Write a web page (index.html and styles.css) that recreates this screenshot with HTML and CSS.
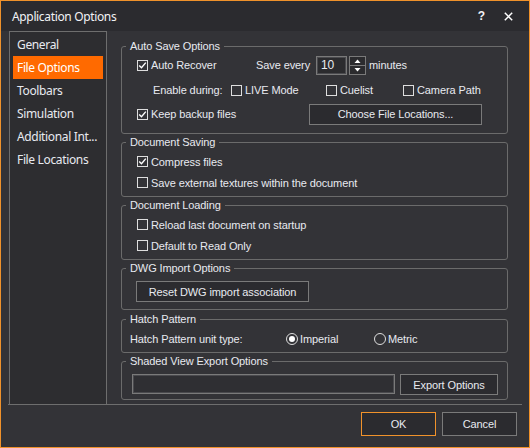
FILE: index.html
```html
<!DOCTYPE html>
<html>
<head>
<meta charset="utf-8">
<title>Application Options</title>
<link rel="stylesheet" href="styles.css">
</head>
<body>
<div class="window">
  <div class="titlebar">
    <span class="title">Application Options</span>
    <span class="tb-btns">
      <span class="help">?</span>
      <svg class="close" width="9" height="9" viewBox="0 0 9 9"><path d="M0.8 0.8L8.2 8.2M8.2 0.8L0.8 8.2" stroke="#ffffff" stroke-width="1.5"/></svg>
    </span>
  </div>
  <div class="main">
    <ul class="nav">
      <li>General</li>
      <li class="sel">File Options</li>
      <li>Toolbars</li>
      <li>Simulation</li>
      <li>Additional Int...</li>
      <li>File Locations</li>
    </ul>
    <div class="content">
      <fieldset class="grp">
        <legend>Auto Save Options</legend>
        <div class="gin g-auto">
          <div class="row r1">
            <label class="chk w-ar"><span class="box"><svg width="9" height="9" viewBox="0 0 9 9"><path d="M1.2 4.4L3.5 6.8L7.8 1.6" fill="none" stroke="#ffffff" stroke-width="1.4"/></svg></span>Auto Recover</label>
            <span class="lbl w-se">Save every</span>
            <span class="num">10</span>
            <span class="spin">
              <span class="sp-half"><svg width="7" height="4" viewBox="0 0 7 4"><path d="M0.5 4L3.5 0.5L6.5 4Z" fill="#ffffff"/></svg></span>
              <span class="sp-half sp-bot"><svg width="7" height="4" viewBox="0 0 7 4"><path d="M0.5 0L6.5 0L3.5 3.5Z" fill="#ffffff"/></svg></span>
            </span>
            <span class="lbl minutes">minutes</span>
          </div>
          <div class="row r2">
            <span class="lbl w-ed">Enable during:</span>
            <label class="chk w-live"><span class="box"></span>LIVE Mode</label>
            <label class="chk w-cue"><span class="box"></span>Cuelist</label>
            <label class="chk"><span class="box"></span>Camera Path</label>
          </div>
          <div class="row r3">
            <label class="chk w-kb"><span class="box"><svg width="9" height="9" viewBox="0 0 9 9"><path d="M1.2 4.4L3.5 6.8L7.8 1.6" fill="none" stroke="#ffffff" stroke-width="1.4"/></svg></span>Keep backup files</label>
            <button class="btn btn-cfl">Choose File Locations...</button>
          </div>
        </div>
      </fieldset>

      <fieldset class="grp">
        <legend>Document Saving</legend>
        <div class="gin g-two">
          <div class="row rr"><label class="chk"><span class="box"><svg width="9" height="9" viewBox="0 0 9 9"><path d="M1.2 4.4L3.5 6.8L7.8 1.6" fill="none" stroke="#ffffff" stroke-width="1.4"/></svg></span>Compress files</label></div>
          <div class="row rr"><label class="chk"><span class="box"></span>Save external textures within the document</label></div>
        </div>
      </fieldset>

      <fieldset class="grp">
        <legend>Document Loading</legend>
        <div class="gin g-two">
          <div class="row rr"><label class="chk"><span class="box"></span>Reload last document on startup</label></div>
          <div class="row rr"><label class="chk"><span class="box"></span>Default to Read Only</label></div>
        </div>
      </fieldset>

      <fieldset class="grp">
        <legend>DWG Import Options</legend>
        <div class="gin g-dwg">
          <button class="btn btn-dwg">Reset DWG import association</button>
        </div>
      </fieldset>

      <fieldset class="grp grp-hatch">
        <legend>Hatch Pattern</legend>
        <div class="gin g-hatch">
          <div class="row rh">
            <span class="lbl w-hp">Hatch Pattern unit type:</span>
            <label class="rdo w-imp"><span class="rad on"></span>Imperial</label>
            <label class="rdo"><span class="rad"></span>Metric</label>
          </div>
        </div>
      </fieldset>

      <fieldset class="grp">
        <legend>Shaded View Export Options</legend>
        <div class="gin g-shade">
          <span class="field"></span>
          <button class="btn btn-exp">Export Options</button>
        </div>
      </fieldset>
    </div>
  </div>
  <div class="footer">
    <button class="btn btn-ok">OK</button>
    <button class="btn btn-cancel">Cancel</button>
  </div>
</div>
</body>
</html>
```

FILE: styles.css
```css
* { box-sizing: border-box; }
html, body { margin: 0; padding: 0; background: #333337; }
body { width: 530px; height: 448px; overflow: hidden; }

.window {
  width: 530px;
  height: 448px;
  border: 1px solid #f0922b;
  background: #333337;
  color: #e8eaf0;
  display: flex;
  flex-direction: column;
  font-family: "Liberation Sans", Arial, sans-serif;
  font-size: 11px;
  letter-spacing: -0.1px;
}

.titlebar {
  flex: none;
  height: 30px;
  background: #2b2b2f;
  display: flex;
  align-items: center;
  justify-content: space-between;
  padding: 0 16px 0 11px;
  font-family: "Noto Sans", sans-serif;
  font-size: 12px;
  letter-spacing: -0.35px;
  color: #f2f2f5;
}
.tb-btns { display: flex; align-items: center; gap: 19px; }
.help { font-weight: bold; font-size: 12px; font-family: "Liberation Sans", Arial, sans-serif; letter-spacing: 0; }
.close { display: block; }

.main {
  flex: none;
  height: 374px;
  display: flex;
  margin: 0 7px 0 7px;
  border-bottom: 1px solid #6e6e6e;
}

.nav {
  margin: 0 0 0 1px;
  padding: 1px 3px 0;
  list-style: none;
  width: 98px;
  border: 1px solid #6e6e6e;
  border-bottom: 0;
  background: #2d2d30;
  font-family: "Noto Sans", sans-serif;
  font-size: 12px;
  letter-spacing: -0.35px;
}
.nav li {
  height: 23px;
  line-height: 23px;
  padding-left: 4px;
  white-space: nowrap;
  overflow: hidden;
}
.nav li.sel { background: #ff6a00; color: #ffffff; }

.content {
  margin-left: 14px;
  width: 387px;
  padding-top: 8px;
  display: flex;
  flex-direction: column;
  gap: 1px;
}

fieldset.grp {
  margin: 0;
  padding: 0;
  min-width: 0;
  border: 1px solid #6b6b6b;
  border-radius: 3px;
}
fieldset.grp-hatch { margin-top: 1px; }
legend {
  margin-left: 4px;
  padding: 0 4px;
  height: 14px;
  line-height: 14px;
}

.gin { display: flex; flex-direction: column; }
.row { display: flex; align-items: center; }
.lbl { white-space: nowrap; }

.g-auto { height: 80px; padding-left: 15px; }
.r1 { height: 24px; }
.r2 { height: 26px; padding-left: 16px; }
.r3 { height: 22px; }
.w-ar { width: 119px; }
.w-se { width: 60px; }
.w-ed { width: 78px; }
.w-live { width: 95px; }
.w-cue { width: 77px; }
.w-kb { width: 172px; }

.chk, .rdo { display: flex; align-items: center; white-space: nowrap; }
.box {
  flex: none;
  width: 11px;
  height: 11px;
  border: 1px solid #dedede;
  margin-right: 3px;
  display: flex;
  align-items: center;
  justify-content: center;
}
.box svg { display: block; }

.num {
  width: 31px;
  height: 19px;
  border: 1px solid #7a7a7a;
  box-shadow: inset 0 0 0 1px #4a4a4e;
  background: #2b2b2e;
  padding-left: 4px;
  line-height: 17px;
  font-size: 12px;
}
.spin {
  width: 17px;
  height: 19px;
  margin-left: 2px;
  border: 1px solid #7a7a7a;
  display: flex;
  flex-direction: column;
  background: #2b2b2e;
}
.sp-half { flex: 1; display: flex; align-items: center; justify-content: center; }
.sp-half svg { display: block; }
.sp-bot { border-top: 1px solid #7a7a7a; }
.minutes { margin-left: 3px; }

.btn {
  font-family: "Liberation Sans", Arial, sans-serif;
  font-size: 11px;
  letter-spacing: -0.1px;
  color: #e8eaf0;
  background: #2b2b2f;
  border: 1px solid #7a7a7a;
  padding: 0;
  margin: 0;
  height: 21px;
}
.btn-cfl { width: 173px; }

.g-two { height: 47px; padding: 2px 0 0 15px; }
.rr { height: 21px; }

.g-dwg { height: 34px; padding: 6px 0 0 14px; }
.btn-dwg { width: 173px; }

.g-hatch { height: 26px; padding: 2px 0 0 8px; }
.rh { height: 22px; }
.w-hp { width: 156px; }
.w-imp { width: 88px; }
.rad {
  flex: none;
  width: 12px;
  height: 12px;
  border: 1px solid #dedede;
  border-radius: 50%;
  margin-right: 2px;
  display: flex;
  align-items: center;
  justify-content: center;
}
.rad.on::after {
  content: "";
  width: 6px;
  height: 6px;
  border-radius: 50%;
  background: #ffffff;
}

.g-shade { height: 31px; padding: 6px 0 0 10px; flex-direction: row; align-items: flex-start; gap: 5px; }
.field {
  width: 263px;
  height: 20px;
  border: 1px solid #7a7a7a;
  box-shadow: inset 0 0 0 1px #4a4a4e;
  background: #2f2f33;
}
.btn-exp { width: 98px; }

.footer {
  flex: 1;
  display: flex;
  justify-content: flex-end;
  align-items: flex-start;
  gap: 6px;
  padding: 7px 12px 0 0;
}
.btn-ok, .btn-cancel { width: 75px; height: 24px; font-size: 11px; }
.btn-ok { border-color: #f0922b; }
```
